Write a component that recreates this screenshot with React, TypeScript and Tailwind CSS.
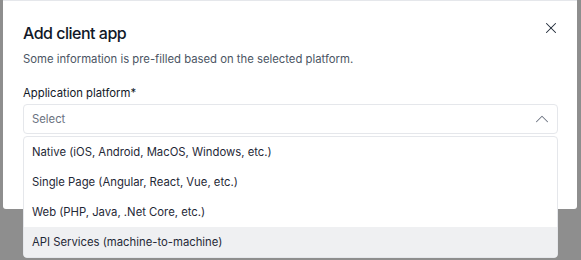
import { X, ChevronUp } from 'lucide-react';

const options = [
  'Native (iOS, Android, MacOS, Windows, etc.)',
  'Single Page (Angular, React, Vue, etc.)',
  'Web (PHP, Java, .Net Core, etc.)',
  'API Services (machine-to-machine)',
];

export default function App() {
  return (
    <div
      className="relative w-[581px] h-[260px] overflow-hidden bg-[#8e8e8e]"
      style={{ fontFamily: 'Inter, "Noto Sans", sans-serif' }}
    >
      {/* Modal */}
      <div className="relative ml-[3px] w-[574px] h-[209px] bg-white rounded-b-[3px] border-t border-[#e5e7eb] px-5 pt-[22px]">
        <h2 className="text-[16px] leading-[20px] font-medium tracking-[-0.5px] text-[#111827]">Add client app</h2>
        <button className="absolute right-[17px] top-[18px] text-[#1f2937]">
          <X size={18} strokeWidth={1.4} />
        </button>
        <p className="mt-[8px] text-[11.3px] leading-[16px] text-[#4b5563]">
          Some information is pre-filled based on the selected platform.
        </p>
        <label className="block mt-[18px] text-[11.3px] leading-[16px] text-[#111827]">Application platform*</label>
        <div className="mt-[3px] h-[30px] w-[535px] border border-[#e5e7eb] rounded-[4px] flex items-center justify-between pl-[8px] pr-[4px]">
          <span className="text-[11.3px] text-[#6b7280]">Select</span>
          <ChevronUp size={22} strokeWidth={1.1} className="text-[#6b7280]" />
        </div>
      </div>

      {/* Dropdown menu */}
      <div className="absolute left-[23px] top-[136px] w-[535px] bg-white border border-[#e5e7eb] rounded-[4px] overflow-hidden">
        {options.map((o, i) => (
          <div
            key={o}
            className={`h-[30px] flex items-center pl-[8px] text-[11.3px] text-[#1f2937] ${i === 3 ? 'bg-[#eff0f2]' : ''}`}
          >
            {o}
          </div>
        ))}
      </div>
    </div>
  );
}
